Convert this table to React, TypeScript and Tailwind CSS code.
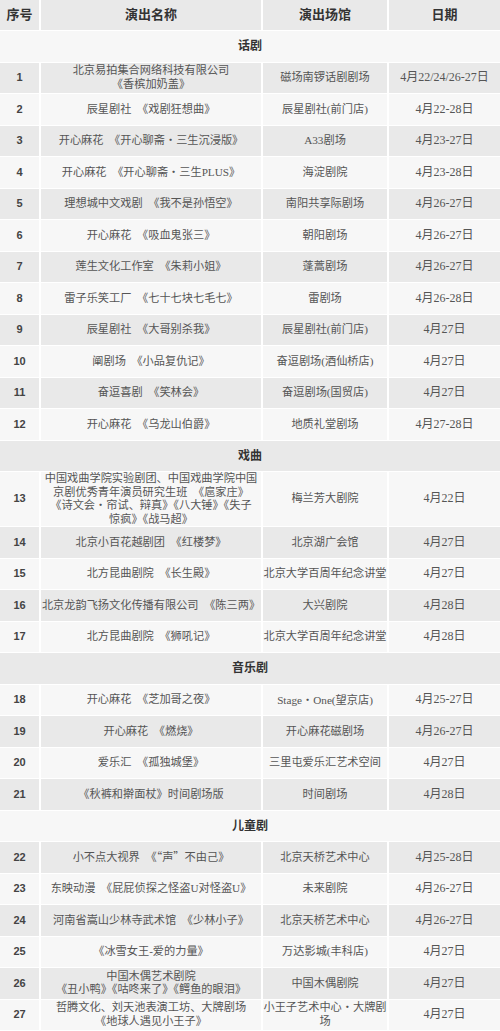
import React from "react";

type Row = { n: number; name: React.ReactNode; venue: React.ReactNode; date: string; tall?: boolean };
type Section = { title: string; rows: Row[] };

const S = "\u3000";
const D = "・";

const cjk = { fontFamily: '"Noto Sans CJK SC", sans-serif' };

const sections: Section[] = [
  {
    title: "话剧",
    rows: [
      { n: 1, name: <>北京易拍集合网络科技有限公司<br />《香槟加奶盖》</>, venue: "磁场南锣话剧剧场", date: "4月22/24/26-27日" },
      { n: 2, name: `辰星剧社${S}《戏剧狂想曲》`, venue: "辰星剧社(前门店)", date: "4月22-28日" },
      { n: 3, name: `开心麻花${S}《开心聊斋${D}三生沉浸版》`, venue: "A33剧场", date: "4月23-27日" },
      { n: 4, name: `开心麻花${S}《开心聊斋${D}三生PLUS》`, venue: "海淀剧院", date: "4月23-28日" },
      { n: 5, name: `理想城中文戏剧${S}《我不是孙悟空》`, venue: "南阳共享际剧场", date: "4月26-27日" },
      { n: 6, name: `开心麻花${S}《吸血鬼张三》`, venue: "朝阳剧场", date: "4月26-27日" },
      { n: 7, name: `莲生文化工作室${S}《朱莉小姐》`, venue: "蓬蒿剧场", date: "4月26-27日" },
      { n: 8, name: `雷子乐笑工厂${S}《七十七块七毛七》`, venue: "雷剧场", date: "4月26-28日" },
      { n: 9, name: `辰星剧社${S}《大哥别杀我》`, venue: "辰星剧社(前门店)", date: "4月27日" },
      { n: 10, name: `阐剧场${S}《小品复仇记》`, venue: "奋逗剧场(酒仙桥店)", date: "4月27日" },
      { n: 11, name: `奋逗喜剧${S}《笑林会》`, venue: "奋逗剧场(国贸店)", date: "4月27日" },
      { n: 12, name: `开心麻花${S}《乌龙山伯爵》`, venue: "地质礼堂剧场", date: "4月27-28日" },
    ],
  },
  {
    title: "戏曲",
    rows: [
      {
        n: 13,
        tall: true,
        name: (
          <>
            中国戏曲学院实验剧团、中国戏曲学院中国
            <br />
            京剧优秀青年演员研究生班{S}《扈家庄》
            <br />
            《诗文会{D}帘试、辩真》《八大锤》《失子
            <br />
            惊疯》《战马超》
          </>
        ),
        venue: "梅兰芳大剧院",
        date: "4月22日",
      },
      { n: 14, name: `北京小百花越剧团${S}《红楼梦》`, venue: "北京湖广会馆", date: "4月27日" },
      { n: 15, name: `北方昆曲剧院${S}《长生殿》`, venue: "北京大学百周年纪念讲堂", date: "4月27日" },
      { n: 16, name: `北京龙韵飞扬文化传播有限公司${S}《陈三两》`, venue: "大兴剧院", date: "4月28日" },
      { n: 17, name: `北方昆曲剧院${S}《狮吼记》`, venue: "北京大学百周年纪念讲堂", date: "4月28日" },
    ],
  },
  {
    title: "音乐剧",
    rows: [
      { n: 18, name: `开心麻花${S}《芝加哥之夜》`, venue: <>Stage<span style={cjk}>{D}</span>One(望京店)</>, date: "4月25-27日" },
      { n: 19, name: `开心麻花${S}《燃烧》`, venue: "开心麻花磁剧场", date: "4月26-27日" },
      { n: 20, name: `爱乐汇${S}《孤独城堡》`, venue: "三里屯爱乐汇艺术空间", date: "4月27日" },
      { n: 21, name: "《秋裤和擀面杖》时间剧场版", venue: "时间剧场", date: "4月28日" },
    ],
  },
  {
    title: "儿童剧",
    rows: [
      { n: 22, name: <>小不点大视界{S}《<span style={cjk}>“声”</span>不由己》</>, venue: "北京天桥艺术中心", date: "4月25-28日" },
      { n: 23, name: `东映动漫${S}《屁屁侦探之怪盗U对怪盗U》`, venue: "未来剧院", date: "4月26-27日" },
      { n: 24, name: `河南省嵩山少林寺武术馆${S}《少林小子》`, venue: "北京天桥艺术中心", date: "4月26-27日" },
      { n: 25, name: "《冰雪女王-爱的力量》", venue: "万达影城(丰科店)", date: "4月27日" },
      { n: 26, name: <>中国木偶艺术剧院<br />《丑小鸭》《咕咚来了》《鳄鱼的眼泪》</>, venue: "中国木偶剧院", date: "4月27日" },
      { n: 27, name: <>哲腾文化、刘天池表演工坊、大牌剧场<br />《地球人遇见小王子》</>, venue: <>小王子艺术中心{D}大牌剧<br />场</>, date: "4月27日" },
    ],
  },
];

const body = { fontFamily: '"Liberation Serif", "Noto Sans CJK SC", serif' };
const head = { fontFamily: '"Liberation Sans", "Noto Sans CJK SC", sans-serif' };

export default function App() {
  let idx = 0;
  const bg = () => (idx++ % 2 === 0 ? "bg-[#e9e9e9]" : "bg-[#f7f7f7]");

  return (
    <div className="w-[500px] h-[1031px] overflow-hidden bg-[#f7f7f7]">
      <div className={`${bg()} flex h-[31px] border-b border-white text-[13px] font-bold text-[#333]`} style={head}>
        <div className="w-[41px] shrink-0 flex items-center justify-center border-r-2 border-white">序号</div>
        <div className="w-[222px] shrink-0 flex items-center justify-center border-r-2 border-white">演出名称</div>
        <div className="w-[126px] shrink-0 flex items-center justify-center border-r-2 border-white">演出场馆</div>
        <div className="flex-1 flex items-center justify-center">日期</div>
      </div>
      {sections.map((sec) => (
        <React.Fragment key={sec.title}>
          <div
            className={`${bg()} h-[31.5px] flex items-center justify-center border-b border-white text-[12px] font-bold text-[#333]`}
            style={head}
          >
            {sec.title}
          </div>
          {sec.rows.map((r) => (
            <div
              key={r.n}
              className={`${bg()} flex ${r.tall ? "h-[55px]" : "h-[31.5px]"} border-b border-white text-[11.2px] leading-[13.5px] text-[#555]`}
              style={body}
            >
              <div
                className="w-[41px] shrink-0 flex items-center justify-center border-r-2 border-white text-[11px] font-bold text-[#444]"
                style={head}
              >
                {r.n}
              </div>
              <div className="w-[222px] shrink-0 flex items-center justify-center text-center whitespace-nowrap border-r-2 border-white overflow-hidden">
                <div>{r.name}</div>
              </div>
              <div className="w-[126px] shrink-0 flex items-center justify-center text-center whitespace-nowrap border-r-2 border-white">
                <div>{r.venue}</div>
              </div>
              <div className="flex-1 flex items-center justify-center whitespace-nowrap text-[12px]">{r.date}</div>
            </div>
          ))}
        </React.Fragment>
      ))}
    </div>
  );
}
